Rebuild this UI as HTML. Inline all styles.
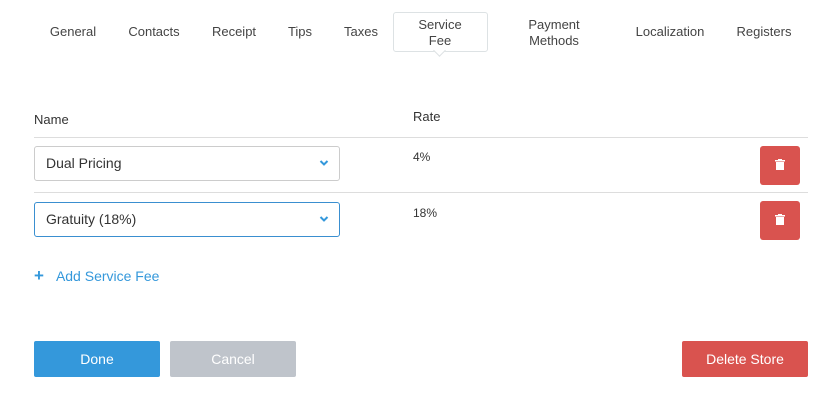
<html><head><style>
body{margin:0;width:834px;height:420px;background:#fff;font-family:"Liberation Sans",sans-serif;color:#333;position:relative;overflow:hidden}
.a{position:absolute}
.t{position:absolute;font-size:13px;color:#444;text-align:center;transform:translateX(-50%);line-height:16px;white-space:nowrap}
.sel{position:absolute;left:34px;width:304px;height:33px;border:1px solid #ccc;border-radius:3px;font-size:14px;line-height:33px;box-sizing:content-box}
.sel span{margin-left:11px}
.chev{position:absolute;right:10px;top:12px}
.del{position:absolute;left:760px;width:40px;height:39px;background:#d9534f;border-radius:3px}
.btn{position:absolute;top:341px;height:36px;width:126px;border-radius:2px;color:#fff;font-size:14px;text-align:center;line-height:36px}
.line{position:absolute;left:34px;width:774px;height:1px;background:#ddd}
</style></head><body>
<div class="t" style="left:73px;top:24px">General</div>
<div class="t" style="left:154px;top:24px">Contacts</div>
<div class="t" style="left:234px;top:24px">Receipt</div>
<div class="t" style="left:300px;top:24px">Tips</div>
<div class="t" style="left:361px;top:24px">Taxes</div>
<div class="a" style="left:393px;top:12px;width:93px;height:38px;border:1px solid #dde2e4;border-radius:3px"></div>
<div class="a" style="left:435px;top:46px;width:8px;height:8px;background:#fff;border-right:1px solid #dde2e4;border-bottom:1px solid #dde2e4;transform:rotate(45deg)"></div>
<div class="t" style="left:440px;top:17px">Service<br>Fee</div>
<div class="t" style="left:554px;top:17px">Payment<br>Methods</div>
<div class="t" style="left:670px;top:24px">Localization</div>
<div class="t" style="left:764px;top:24px">Registers</div>
<div class="a" style="left:34px;top:112px;font-size:13px">Name</div>
<div class="a" style="left:413px;top:109px;font-size:13px">Rate</div>
<div class="line" style="top:137px"></div>
<div class="line" style="top:192px"></div>
<div class="sel" style="top:146px"><span>Dual Pricing</span><svg class="chev" width="10" height="8" viewBox="0 0 10 8"><path d="M1.5 2l3.5 3.5 3.5-3.5" stroke="#3498db" stroke-width="2" fill="none"/></svg></div>
<div class="sel" style="top:202px;border-color:#3a8fd0"><span>Gratuity (18%)</span><svg class="chev" width="10" height="8" viewBox="0 0 10 8"><path d="M1.5 2l3.5 3.5 3.5-3.5" stroke="#3498db" stroke-width="2" fill="none"/></svg></div>
<div class="a" style="left:413px;top:150px;font-size:12px">4%</div>
<div class="a" style="left:413px;top:206px;font-size:12px">18%</div>
<div class="del" style="top:146px"><svg class="a" style="left:14px;top:13px" width="12" height="12" viewBox="0 0 12 12"><rect x="1" y="1" width="10" height="1.5" fill="#fff"/><rect x="4" y="0" width="4" height="1.5" fill="#fff"/><rect x="2" y="3" width="8" height="8" fill="#fff"/></svg></div>
<div class="del" style="top:201px"><svg class="a" style="left:14px;top:13px" width="12" height="12" viewBox="0 0 12 12"><rect x="1" y="1" width="10" height="1.5" fill="#fff"/><rect x="4" y="0" width="4" height="1.5" fill="#fff"/><rect x="2" y="3" width="8" height="8" fill="#fff"/></svg></div>
<div class="a" style="left:34px;top:266px;color:#3498db;font-size:14px"><span style="font-weight:bold;font-size:17px;margin-right:12px">+</span>Add Service Fee</div>
<div class="btn" style="left:34px;background:#3498db">Done</div>
<div class="btn" style="left:170px;background:#bfc4cb">Cancel</div>
<div class="btn" style="left:682px;background:#d9534f">Delete Store</div>
</body></html>
